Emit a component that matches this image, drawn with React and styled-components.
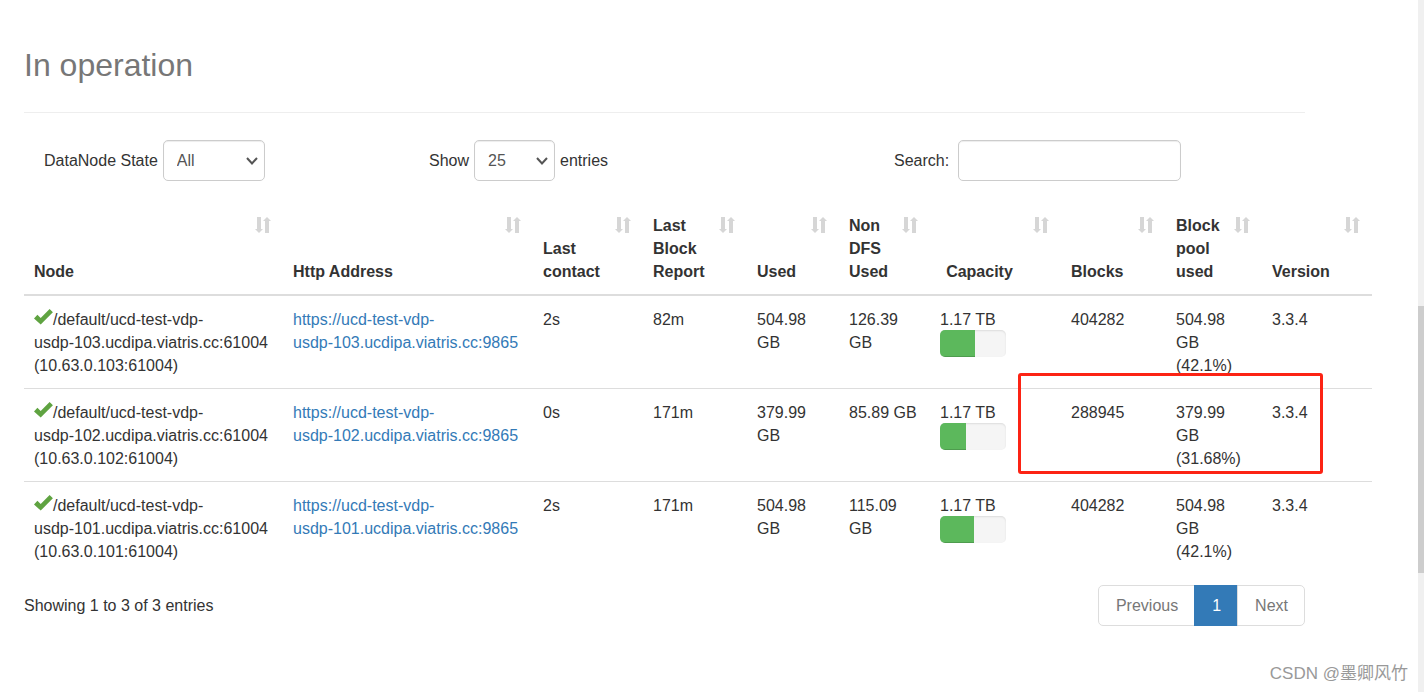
import React from 'react';
import styled, { createGlobalStyle } from 'styled-components';

const columns = [
  { title: 'Node', width: 259 },
  { title: 'Http Address', width: 250 },
  { title: 'Last contact', width: 110 },
  { title: 'Last Block Report', width: 104 },
  { title: 'Used', width: 92 },
  { title: 'Non DFS Used', width: 91 },
  { title: 'Capacity', width: 131, center: true },
  { title: 'Blocks', width: 105 },
  { title: 'Block pool used', width: 96 },
  { title: 'Version', width: 110 },
];

const nodes = [
  {
    id: 103,
    contact: '2s',
    report: '82m',
    used: '504.98 GB',
    nonDfs: '126.39 GB',
    percent: 53,
    blocks: '404282',
    pool: '504.98 GB (42.1%)',
  },
  {
    id: 102,
    contact: '0s',
    report: '171m',
    used: '379.99 GB',
    nonDfs: '85.89 GB',
    percent: 39,
    blocks: '288945',
    pool: '379.99 GB (31.68%)',
  },
  {
    id: 101,
    contact: '2s',
    report: '171m',
    used: '504.98 GB',
    nonDfs: '115.09 GB',
    percent: 52,
    blocks: '404282',
    pool: '504.98 GB (42.1%)',
  },
];

export default function App() {
  return (
    <Page>
      <GlobalStyle />
      <Main>
        <Narrow>
          <Title>In operation</Title>
          {/* Filters */}
          <Toolbar>
            <Field>
              <label htmlFor="state">DataNode State</label>
              <SelectBox $width={102}>
                <Select id="state" defaultValue="All">
                  <option>All</option>
                  <option>In service</option>
                </Select>
                <Chevron />
              </SelectBox>
            </Field>
            <Field>
              <label htmlFor="length">Show</label>
              <SelectBox $width={81}>
                <Select id="length" defaultValue="25">
                  <option>25</option>
                  <option>50</option>
                </Select>
                <Chevron />
              </SelectBox>
              <span>entries</span>
            </Field>
            <Field $gap={9}>
              <label htmlFor="search">Search:</label>
              <SearchInput id="search" type="search" />
            </Field>
          </Toolbar>
        </Narrow>
        {/* Node table */}
        <TableWrapper>
          <Table>
            <colgroup>
              {columns.map(col => (
                <Col key={col.title} $width={col.width} />
              ))}
            </colgroup>
            <thead>
              <tr>
                {columns.map(col => (
                  <Th key={col.title} $center={col.center}>
                    {col.title}
                    <Sort />
                  </Th>
                ))}
              </tr>
            </thead>
            <tbody>
              {nodes.map(node => (
                <Tr key={node.id}>
                  <Td>
                    <Check />
                    /default/ucd-test-vdp-
                    <Host>{`usdp-${node.id}.ucdipa.viatris.cc:61004`}</Host>
                    {` (10.63.0.${node.id}:61004)`}
                  </Td>
                  <Td>
                    <Link href="#">
                      https://ucd-test-vdp-
                      <Host>{`usdp-${node.id}.ucdipa.viatris.cc:9865`}</Host>
                    </Link>
                  </Td>
                  <Td>{node.contact}</Td>
                  <Td>{node.report}</Td>
                  <Td>{node.used}</Td>
                  <Td>{node.nonDfs}</Td>
                  <Td>
                    1.17 TB
                    <Progress>
                      <ProgressBar style={{ width: `${node.percent}%` }} />
                    </Progress>
                  </Td>
                  <Td>{node.blocks}</Td>
                  <Td>{node.pool}</Td>
                  <Td>3.3.4</Td>
                </Tr>
              ))}
            </tbody>
          </Table>
          <Highlight />
        </TableWrapper>
        {/* Paging */}
        <Narrow>
          <Footer>
            <span>Showing 1 to 3 of 3 entries</span>
            <Pagination>
              <PageButton>Previous</PageButton>
              <PageButton $active>1</PageButton>
              <PageButton>Next</PageButton>
            </Pagination>
          </Footer>
        </Narrow>
      </Main>
      <ScrollTrack>
        <ScrollThumb />
      </ScrollTrack>
      <Watermark>CSDN @墨卿风竹</Watermark>
    </Page>
  );
}

function Chevron() {
  return (
    <ChevronSvg viewBox="0 0 12 8" aria-hidden="true">
      <path d="M1 1l5 5.500 5-5.500" fill="none" stroke="#555" strokeWidth="2" />
    </ChevronSvg>
  );
}

function Sort() {
  return (
    <SortSvg viewBox="0 0 16 16" aria-hidden="true">
      <path d="M2 0h4v12h2l-4 4-4-4h2zM10 16V4H8l4-4 4 4h-2v12z" fill="#d6d6d6" />
    </SortSvg>
  );
}

function Check() {
  return (
    <CheckSvg viewBox="0 0 19 16" aria-hidden="true">
      <path d="M0 9.400L3.400 5.800l3.300 3.200L15.600 0l3.300 3.300L6.700 15.600z" fill="#5fa341" />
    </CheckSvg>
  );
}

const GlobalStyle = createGlobalStyle`
  * {
    box-sizing: border-box;
  }
  body {
    margin: 0;
    background-color: #fff;
    color: #333;
    font-family: 'Liberation Sans', Arial, sans-serif;
    font-size: 16px;
    line-height: 23px;
  }
`;

const Page = styled.div`
  position: relative;
  display: flex;
  min-height: 100vh;
`;

const Main = styled.main`
  flex: 1;
  padding: 47px 46px 0 24px;
`;

const Narrow = styled.div`
  margin-right: 67px;
`;

const Title = styled.h1`
  margin: 0 0 27px;
  padding-bottom: 29px;
  border-bottom: 1px solid #eee;
  color: #777;
  font-size: 32px;
  font-weight: 400;
  line-height: 36px;
`;

const Toolbar = styled.div`
  display: grid;
  grid-template-columns: 385fr 465fr 411fr;
  padding-left: 20px;
`;

const Field = styled.div`
  display: flex;
  align-items: center;
  gap: ${props => props.$gap || 5}px;
`;

const SelectBox = styled.div`
  position: relative;
  width: ${props => props.$width}px;
`;

const Select = styled.select`
  appearance: none;
  display: block;
  width: 100%;
  height: 41px;
  padding: 0 13px;
  border: 1px solid #ccc;
  border-radius: 5px;
  background-color: #fff;
  box-shadow: inset 0 1px 1px rgba(0, 0, 0, 0.075);
  color: #555;
  font: inherit;
`;

const ChevronSvg = styled.svg`
  position: absolute;
  top: 17px;
  right: 7px;
  width: 12px;
  height: 8px;
  pointer-events: none;
`;

const SearchInput = styled.input`
  width: 223px;
  height: 41px;
  padding: 0 13px;
  border: 1px solid #ccc;
  border-radius: 5px;
  box-shadow: inset 0 1px 1px rgba(0, 0, 0, 0.075);
  color: #555;
  font: inherit;
`;

const TableWrapper = styled.div`
  position: relative;
  margin-top: 23px;
`;

const Table = styled.table`
  width: 100%;
  table-layout: fixed;
  border-spacing: 0;
`;

const Col = styled.col`
  width: ${props => props.$width}px;
`;

const Th = styled.th`
  position: relative;
  padding: ${props => (props.$center ? '10px 42px 11px 10px' : '10px 35px 11px 10px')};
  border-bottom: 2px solid #ddd;
  text-align: ${props => (props.$center ? 'center' : 'left')};
  vertical-align: bottom;
`;

const SortSvg = styled.svg`
  position: absolute;
  top: 13px;
  right: 12px;
  width: 16px;
  height: 16px;
`;

const Td = styled.td`
  padding: 12px 10px 11px;
  vertical-align: top;
`;

const Tr = styled.tr`
  & + & ${Td} {
    border-top: 1px solid #ddd;
  }
`;

const CheckSvg = styled.svg`
  width: 19px;
  height: 16px;
  vertical-align: 0;
`;

const Host = styled.span`
  white-space: nowrap;
`;

const Link = styled.a`
  color: #337ab7;
  text-decoration: none;
`;

const Progress = styled.div`
  width: 66px;
  height: 27px;
  margin-top: -1px;
  overflow: hidden;
  border-radius: 5px;
  background-color: #f5f5f5;
  box-shadow: inset 0 1px 2px rgba(0, 0, 0, 0.1);
`;

const ProgressBar = styled.div`
  height: 100%;
  background-color: #5cb85c;
  box-shadow: inset 0 -1px 0 rgba(0, 0, 0, 0.15);
`;

const Highlight = styled.div`
  position: absolute;
  top: 169px;
  right: 49px;
  width: 305px;
  height: 101px;
  border: 3px solid #fc2314;
  border-radius: 3px;
`;

const Footer = styled.div`
  display: flex;
  justify-content: space-between;
  align-items: center;
  padding-top: 11px;
`;

const Pagination = styled.nav`
  display: flex;
`;

const PageButton = styled.button`
  height: 41px;
  padding: 0 16px 0 17px;
  margin-left: -1px;
  border: 1px solid ${props => (props.$active ? '#337ab7' : '#ddd')};
  background-color: ${props => (props.$active ? '#337ab7' : '#fff')};
  color: ${props => (props.$active ? '#fff' : '#777')};
  font: inherit;
  &:first-child {
    border-radius: 5px 0 0 5px;
  }
  &:last-child {
    border-radius: 0 5px 5px 0;
  }
`;

const ScrollTrack = styled.div`
  display: flex;
  flex-direction: column;
  width: 6px;
  background-color: #f0f0f0;
  &::before {
    content: '';
    flex: 306;
  }
  &::after {
    content: '';
    flex: 119;
  }
`;

const ScrollThumb = styled.div`
  flex: 267;
  background-color: #cdcdcd;
`;

const Watermark = styled.div`
  position: absolute;
  right: 16px;
  bottom: 7px;
  color: #999;
  font-family: 'Liberation Sans', 'Noto Sans CJK SC', sans-serif;
  font-size: 17px;
`;
